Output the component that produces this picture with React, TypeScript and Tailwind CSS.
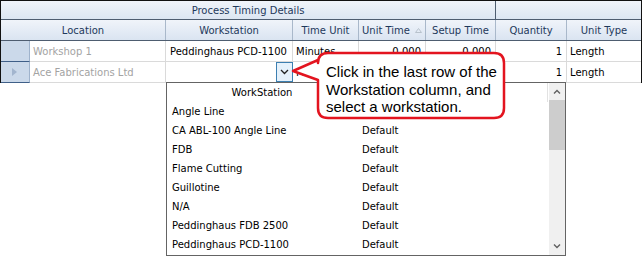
import React from "react";

const rows = [
  { ws: "Angle Line", kind: "" },
  { ws: "CA ABL-100 Angle Line", kind: "Default" },
  { ws: "FDB", kind: "Default" },
  { ws: "Flame Cutting", kind: "Default" },
  { ws: "Guillotine", kind: "Default" },
  { ws: "N/A", kind: "Default" },
  { ws: "Peddinghaus FDB 2500", kind: "Default" },
  { ws: "Peddinghaus PCD-1100", kind: "Default" },
];

function Chevron({ up }: { up?: boolean }) {
  return (
    <svg width="8" height="5" viewBox="0 0 8 5">
      <path
        d={up ? "M1 4.5 L4 1.5 L7 4.5" : "M1 0.5 L4 3.5 L7 0.5"}
        fill="none"
        stroke="#606060"
        strokeWidth="1.4"
      />
    </svg>
  );
}

export default function App() {
  const head = "h-full flex items-center justify-center border-r border-[#a9b8ca] text-[#1e395b]";
  const cell = "h-full flex items-center border-r border-[#dadada]";

  return (
    <div className="relative w-[642px] h-[256px] bg-white overflow-hidden font-['DejaVu_Sans',sans-serif] text-[10px] text-black">
      {/* Grid */}
      <div className="border-t border-l border-r border-[#111]">
        {/* group header */}
        <div className="flex h-[19px] border-b border-[#4e5d70] bg-gradient-to-b from-[#f0f4fa] to-[#dce6f2]">
          <div className="w-[495px] h-full flex items-center justify-center border-r border-[#4e5d70] text-[#1e395b]">
            Process Timing Details
          </div>
          <div className="flex-1" />
        </div>

        {/* column headers */}
        <div className="flex h-[21px] border-b border-[#4e5d70] bg-gradient-to-b from-[#f0f4fa] to-[#dae4f1]">
          <div className={`w-[165px] ${head}`}>Location</div>
          <div className={`w-[127px] ${head}`}>Workstation</div>
          <div className={`w-[66px] ${head}`}>Time Unit</div>
          <div className={`w-[67px] ${head} gap-[5px]`}>
            <span>Unit Time</span>
            <svg width="7" height="5" viewBox="0 0 7 5">
              <path d="M0.5 4.5 L3.5 0.5 L6.5 4.5 Z" fill="none" stroke="#b8c2cc" strokeWidth="1" />
            </svg>
          </div>
          <div className={`w-[70px] ${head} border-[#4e5d70]`}>Setup Time</div>
          <div className={`w-[71px] ${head}`}>Quantity</div>
          <div className="flex-1 h-full flex items-center justify-center text-[#1e395b]">Unit Type</div>
        </div>

        {/* row 1 */}
        <div className="flex h-[21px] border-b border-[#dadada]">
          <div className="w-[29px] h-full bg-[#cbd9ea] border-r border-[#9fb3cc]" />
          <div className={`w-[136px] ${cell} pl-[3px] text-[#a3a3a3]`}>Workshop 1</div>
          <div className={`w-[127px] ${cell} pl-[4px]`}>Peddinghaus PCD-1100</div>
          <div className={`w-[66px] ${cell} pl-[3px]`}>Minutes</div>
          <div className={`w-[67px] ${cell} justify-end pr-[4px]`}>0.000</div>
          <div className={`w-[70px] ${cell} justify-end pr-[4px]`}>0.000</div>
          <div className={`w-[71px] ${cell} justify-end pr-[4px]`}>1</div>
          <div className="flex-1 h-full flex items-center pl-[3px]">Length</div>
        </div>

        {/* row 2 (current) */}
        <div className="flex h-[21px] border-b border-[#dadada]">
          <div className="w-[29px] bg-[#cbd9ea] border-r border-[#9fb3cc] border-t border-b border-t-[#3f5f88] border-b-[#3f5f88] -mt-px h-[22px] flex items-center pl-[11px]">
            <svg width="5" height="8" viewBox="0 0 5 8">
              <path d="M0 0 L5 4 L0 8 Z" fill="#a2b5ce" />
            </svg>
          </div>
          <div className={`w-[136px] ${cell} pl-[3px] text-[#a3a3a3]`}>Ace Fabrications Ltd</div>
          <div className={`w-[127px] ${cell} justify-end`}>
            <div className="w-[17px] h-[20px] -mr-px border border-[#3c7fb1] bg-[#e5f1fb] flex items-center justify-center">
              <svg width="9" height="6" viewBox="0 0 9 6">
                <path d="M1 1 L4.5 4.5 L8 1" fill="none" stroke="#222" strokeWidth="1.3" />
              </svg>
            </div>
          </div>
          <div className={`w-[66px] ${cell} pl-[3px]`}>Minutes</div>
          <div className={`w-[67px] ${cell}`} />
          <div className={`w-[70px] ${cell}`} />
          <div className={`w-[71px] ${cell} justify-end pr-[4px]`}>1</div>
          <div className="flex-1 h-full flex items-center pl-[3px]">Length</div>
        </div>
      </div>

      {/* Dropdown list */}
      <div className="absolute left-[166px] top-[82px] w-[400px] h-[174px] border border-[#646464] bg-white flex">
        <div className="flex-1 flex flex-col">
          <div className="flex h-[19px]">
            <div className="w-[190px] flex items-center justify-center">WorkStation</div>
            <div className="w-[191px] border-r border-[#e2e2e2]" />
          </div>
          {rows.map((r) => (
            <div key={r.ws} className="flex h-[19px] items-center">
              <div className="w-[195px] pl-[5px]">{r.ws}</div>
              <div>{r.kind}</div>
            </div>
          ))}
        </div>
        <div className="w-[16px] h-full bg-[#f0f0f0] flex flex-col items-center">
          <div className="h-[17px] flex items-center justify-center">
            <Chevron up />
          </div>
          <div className="w-full h-[50px] bg-[#cdcdcd]" />
          <div className="flex-1" />
          <div className="h-[17px] flex items-center justify-center">
            <Chevron />
          </div>
        </div>
      </div>

      {/* Callout */}
      <svg className="absolute left-0 top-0 pointer-events-none" width="642" height="256" viewBox="0 0 642 256">
        <path
          d="M328 53 H494 Q504 53 504 63 V108 Q504 118 494 118 H328 Q318 118 318 108 V80 L293 71 L318 60 V63 Q318 53 328 53 Z"
          fill="#fff"
          stroke="#e3141f"
          strokeWidth="2.5"
          strokeLinejoin="round"
        />
      </svg>
      <div className="absolute left-[326px] top-[63px] font-['Liberation_Sans',Arial,sans-serif] text-[15px] leading-[17.5px] text-black">
        <div>Click in the last row of the</div>
        <div>Workstation column, and</div>
        <div>select a workstation.</div>
      </div>
    </div>
  );
}
